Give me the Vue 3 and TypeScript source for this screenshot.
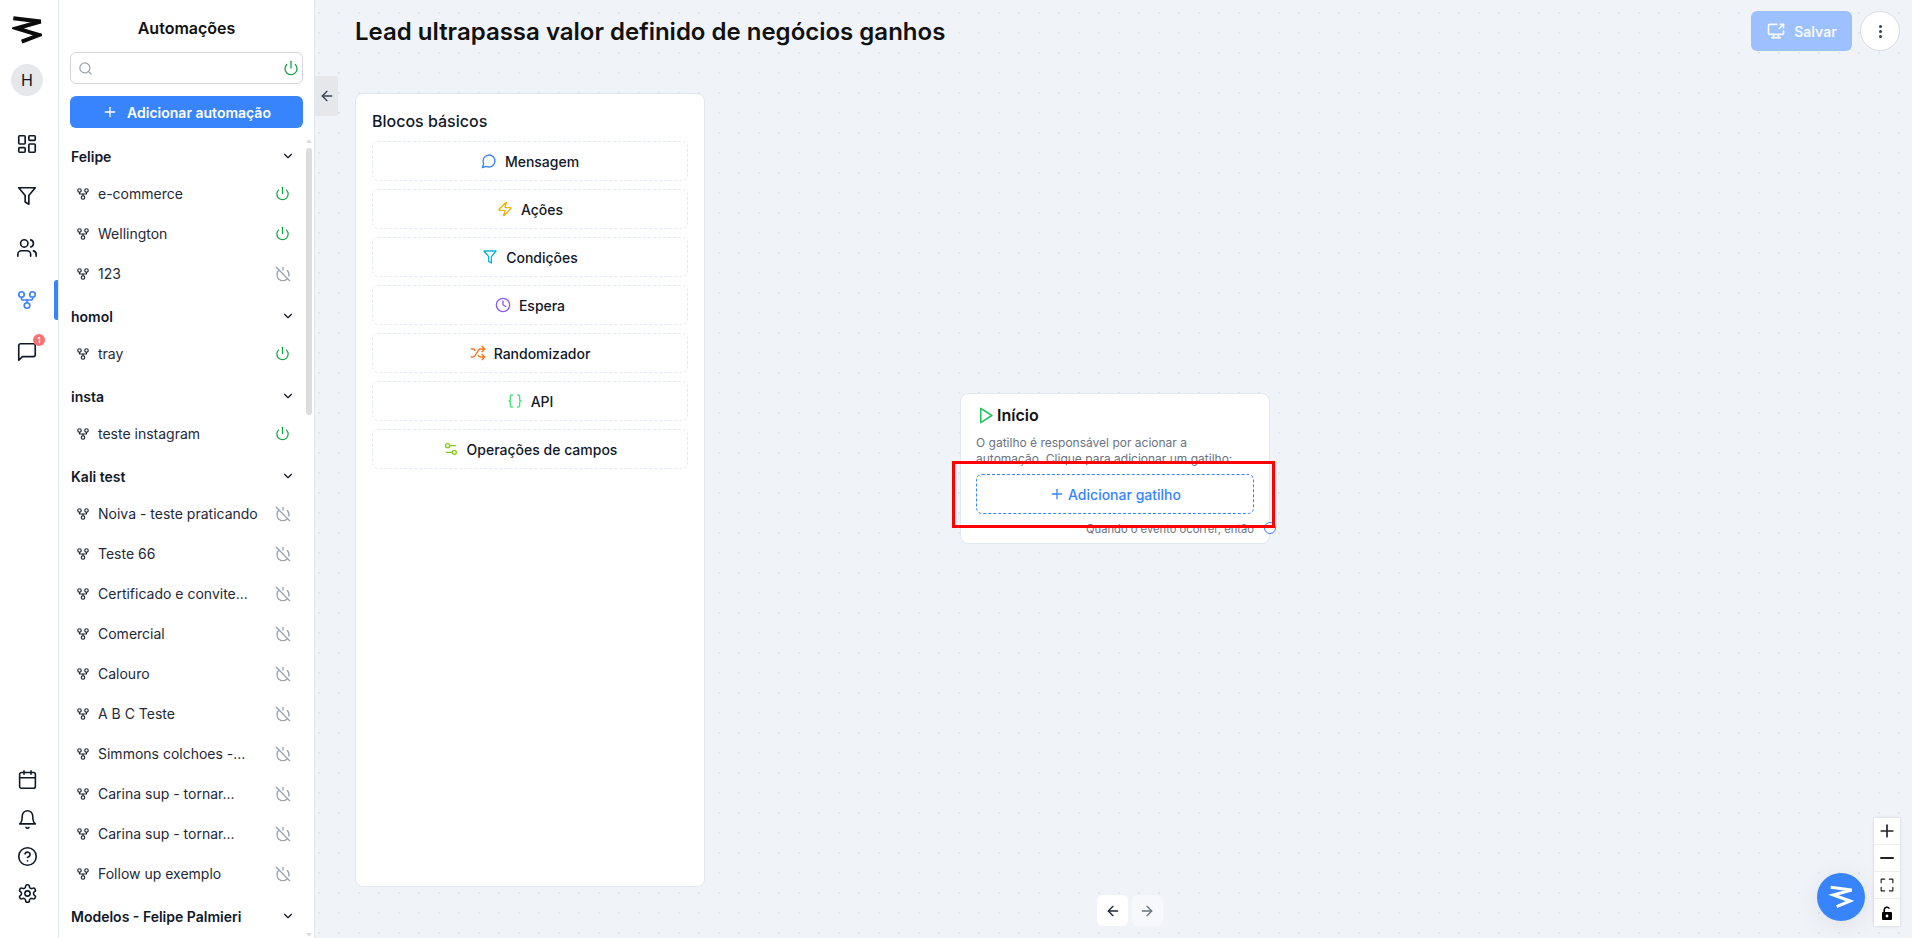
<script setup lang="ts">
const icons: Record<string, string> = {
  dashboard: '<rect width="7" height="9" x="3" y="3" rx="1"/><rect width="7" height="5" x="14" y="3" rx="1"/><rect width="7" height="9" x="14" y="12" rx="1"/><rect width="7" height="5" x="3" y="16" rx="1"/>',
  funnel: '<path d="M3 3h18l-7 8.5V21l-4-2.5v-7z"/>',
  users: '<path d="M16 21v-2a4 4 0 0 0-4-4H6a4 4 0 0 0-4 4v2"/><circle cx="9" cy="7" r="4"/><path d="M22 21v-2a4 4 0 0 0-3-3.87"/><path d="M16 3.13a4 4 0 0 1 0 7.75"/>',
  flow: '<circle cx="12" cy="18" r="3"/><circle cx="6" cy="6" r="3"/><circle cx="18" cy="6" r="3"/><path d="M18 9v2c0 .6-.4 1-1 1H7c-.6 0-1-.4-1-1V9"/><path d="M12 12v3"/>',
  chat: '<path d="M21 15a2 2 0 0 1-2 2H7l-4 4V5a2 2 0 0 1 2-2h14a2 2 0 0 1 2 2z"/>',
  calendar: '<path d="M8 2v4"/><path d="M16 2v4"/><rect width="18" height="18" x="3" y="4" rx="2"/><path d="M3 10h18"/>',
  bell: '<path d="M10.3 21a1.94 1.94 0 0 0 3.4 0"/><path d="M6 8a6 6 0 0 1 12 0c0 7 3 9 3 9H3s3-2 3-9"/>',
  help: '<circle cx="12" cy="12" r="10"/><path d="M9.09 9a3 3 0 0 1 5.83 1c0 2-3 3-3 3"/><path d="M12 17h.01"/>',
  gear: '<path d="M12.22 2h-.44a2 2 0 0 0-2 2v.18a2 2 0 0 1-1 1.73l-.43.25a2 2 0 0 1-2 0l-.15-.08a2 2 0 0 0-2.73.73l-.22.38a2 2 0 0 0 .73 2.73l.15.1a2 2 0 0 1 1 1.72v.51a2 2 0 0 1-1 1.74l-.15.09a2 2 0 0 0-.73 2.73l.22.38a2 2 0 0 0 2.73.73l.15-.08a2 2 0 0 1 2 0l.43.25a2 2 0 0 1 1 1.73V20a2 2 0 0 0 2 2h.44a2 2 0 0 0 2-2v-.18a2 2 0 0 1 1-1.73l.43-.25a2 2 0 0 1 2 0l.15.08a2 2 0 0 0 2.73-.73l.22-.39a2 2 0 0 0-.73-2.73l-.15-.08a2 2 0 0 1-1-1.74v-.5a2 2 0 0 1 1-1.74l.15-.09a2 2 0 0 0 .73-2.73l-.22-.38a2 2 0 0 0-2.73-.73l-.15.08a2 2 0 0 1-2 0l-.43-.25a2 2 0 0 1-1-1.73V4a2 2 0 0 0-2-2z"/><circle cx="12" cy="12" r="3"/>',
  power: '<path d="M12 2v10"/><path d="M18.4 6.6a9 9 0 1 1-12.77.04"/>',
  poweroff: '<path d="M18.36 6.64A9 9 0 0 1 20.77 15"/><path d="M6.16 6.16a9 9 0 1 0 12.68 12.68"/><path d="M12 2v4"/><path d="m2 2 20 20"/>',
  search: '<circle cx="11" cy="11" r="8"/><path d="m21 21-4.3-4.3"/>',
  plus: '<path d="M5 12h14"/><path d="M12 5v14"/>',
  chevron: '<path d="m6 9 6 6 6-6"/>',
  left: '<path d="m12 19-7-7 7-7"/><path d="M19 12H5"/>',
  right: '<path d="M5 12h14"/><path d="m12 5 7 7-7 7"/>',
  bubble: '<path d="M7.9 20A9 9 0 1 0 4 16.1L2 22Z"/>',
  zap: '<path d="M4 14a1 1 0 0 1-.78-1.63l9.9-10.2a.5.5 0 0 1 .86.46l-1.92 6.02A1 1 0 0 0 13 10h7a1 1 0 0 1 .78 1.63l-9.9 10.2a.5.5 0 0 1-.86-.46l1.92-6.02A1 1 0 0 0 11 14z"/>',
  clock: '<circle cx="12" cy="12" r="10"/><path d="M12 6v6l4 2"/>',
  shuffle: '<path d="m18 14 4 4-4 4"/><path d="m18 2 4 4-4 4"/><path d="M2 18h1.973a4 4 0 0 0 3.3-1.7l5.454-8.6a4 4 0 0 1 3.3-1.7H22"/><path d="M2 6h1.972a4 4 0 0 1 3.6 2.2"/><path d="M22 18h-6.041a4 4 0 0 1-3.3-1.8l-.359-.45"/>',
  braces: '<path d="M8 3H7a2 2 0 0 0-2 2v5a2 2 0 0 1-2 2 2 2 0 0 1 2 2v5c0 1.1.9 2 2 2h1"/><path d="M16 21h1a2 2 0 0 0 2-2v-5c0-1.1.9-2 2-2a2 2 0 0 1-2-2V5a2 2 0 0 0-2-2h-1"/>',
  sliders: '<path d="M14 17H5"/><path d="M19 7h-9"/><circle cx="17" cy="17" r="3"/><circle cx="7" cy="7" r="3"/>',
  play: '<polygon points="6 3 20 12 6 21 6 3"/>',
  monitor: '<path d="M21 12v3a1 1 0 0 1-1 1H4a1 1 0 0 1-1-1V5a1 1 0 0 1 1-1h9"/><path d="M7 20h10"/><path d="M9 16v4"/><path d="M15 16v4"/><path d="M17 4h4v4"/><path d="m16 9 5-5"/>',
}

const topNav = [
  { icon: 'dashboard' },
  { icon: 'funnel' },
  { icon: 'users' },
  { icon: 'flow', active: true },
  { icon: 'chat', badge: 1 },
]
const bottomNav = ['calendar', 'bell', 'help', 'gear']

const groups = [
  { name: 'Felipe', items: [
    { name: 'e-commerce', on: true },
    { name: 'Wellington', on: true },
    { name: '123', on: false },
  ] },
  { name: 'homol', items: [{ name: 'tray', on: true }] },
  { name: 'insta', items: [{ name: 'teste instagram', on: true }] },
  { name: 'Kali test', items: [
    { name: 'Noiva - teste praticando', on: false },
    { name: 'Teste 66', on: false },
    { name: 'Certificado e convite...', on: false },
    { name: 'Comercial', on: false },
    { name: 'Calouro', on: false },
    { name: 'A B C Teste', on: false },
    { name: 'Simmons colchoes -...', on: false },
    { name: 'Carina sup - tornar...', on: false },
    { name: 'Carina sup - tornar...', on: false },
    { name: 'Follow up exemplo', on: false },
  ] },
  { name: 'Modelos - Felipe Palmieri', items: [] },
]

const blocks = [
  { label: 'Mensagem', icon: 'bubble', color: '#3b82f6' },
  { label: 'Ações', icon: 'zap', color: '#eab308' },
  { label: 'Condições', icon: 'funnel', color: '#06b6d4' },
  { label: 'Espera', icon: 'clock', color: '#8b5cf6' },
  { label: 'Randomizador', icon: 'shuffle', color: '#f97316' },
  { label: 'API', icon: 'braces', color: '#4ade80' },
  { label: 'Operações de campos', icon: 'sliders', color: '#84cc16' },
]
</script>

<template>
  <div class="app">
    <!-- barra lateral -->
    <nav class="rail">
      <svg class="logo" width="30" height="32" viewBox="0 0 30 32" fill="none" stroke="#0b0b0b" stroke-width="4">
        <path d="M1.3 4.3 28.7 7.5 4.7 14.3 27 21 9.7 27.7" />
      </svg>
      <div class="avatar">H</div>
      <div class="rail-top">
        <div v-for="n in topNav" :key="n.icon" :class="['rail-item', n.active ? 'active' : '']">
          <svg class="ic" width="22" height="22" viewBox="0 0 24 24" v-html="icons[n.icon]"></svg>
          <span v-if="n.badge" class="badge">{{ n.badge }}</span>
        </div>
      </div>
      <div class="rail-bottom">
        <div v-for="n in bottomNav" :key="n" class="rail-item small">
          <svg class="ic" width="21" height="21" viewBox="0 0 24 24" v-html="icons[n]"></svg>
        </div>
      </div>
    </nav>

    <!-- lista de automacoes -->
    <aside class="panel">
      <h2 class="panel-title">Automações</h2>
      <div class="search">
        <svg class="ic search-ic" width="15" height="15" viewBox="0 0 24 24" v-html="icons.search"></svg>
        <svg class="ic on" width="16" height="16" viewBox="0 0 24 24" v-html="icons.power"></svg>
      </div>
      <button class="add-btn">
        <svg class="ic" width="16" height="16" viewBox="0 0 24 24" v-html="icons.plus"></svg>
        <span>Adicionar automação</span>
      </button>
      <div class="list">
        <section v-for="g in groups" :key="g.name" class="group">
          <div class="group-head">
            <span>{{ g.name }}</span>
            <svg class="ic" width="14" height="14" viewBox="0 0 24 24" v-html="icons.chevron"></svg>
          </div>
          <div v-for="(item, i) in g.items" :key="i" class="item">
            <svg class="ic" width="14" height="14" viewBox="0 0 24 24" v-html="icons.flow"></svg>
            <span class="item-name">{{ item.name }}</span>
            <svg :class="['ic', item.on ? 'on' : 'off']" :width="item.on ? 15 : 16" :height="item.on ? 15 : 16" viewBox="0 0 24 24" v-html="icons[item.on ? 'power' : 'poweroff']"></svg>
          </div>
        </section>
      </div>
      <div class="scroll-arrow up"></div>
      <div class="scroll-thumb"></div>
      <div class="scroll-arrow down"></div>
    </aside>

    <!-- editor -->
    <main class="canvas">
      <header class="topbar">
        <h1>Lead ultrapassa valor definido de negócios ganhos</h1>
        <div class="actions">
          <button class="save">
            <svg class="ic" width="20" height="20" viewBox="0 0 24 24" v-html="icons.monitor"></svg>
            <span>Salvar</span>
          </button>
          <button class="more"><i></i><i></i><i></i></button>
        </div>
      </header>

      <button class="collapse">
        <svg class="ic" width="16" height="16" viewBox="0 0 24 24" v-html="icons.left"></svg>
      </button>

      <div class="blocks">
        <h3>Blocos básicos</h3>
        <div class="block-list">
          <div v-for="b in blocks" :key="b.label" class="block">
            <svg class="ic" width="16" height="16" viewBox="0 0 24 24" :style="{ color: b.color }" v-html="icons[b.icon]"></svg>
            <span>{{ b.label }}</span>
          </div>
        </div>
      </div>

      <div class="node">
        <div class="node-title">
          <svg class="ic play" width="19" height="19" viewBox="0 0 24 24" v-html="icons.play"></svg>
          <span>Início</span>
        </div>
        <p class="node-text">O gatilho é responsável por acionar a automação. Clique para adicionar um gatilho:</p>
        <button class="trigger">
          <svg class="ic" width="16" height="16" viewBox="0 0 24 24" v-html="icons.plus"></svg>
          <span>Adicionar gatilho</span>
        </button>
        <div class="node-foot">Quando o evento ocorrer, então</div>
        <span class="handle"></span>
      </div>
      <div class="highlight"></div>

      <div class="history">
        <button class="hist-btn">
          <svg class="ic" width="16" height="16" viewBox="0 0 24 24" v-html="icons.left"></svg>
        </button>
        <button class="hist-btn off">
          <svg class="ic" width="16" height="16" viewBox="0 0 24 24" v-html="icons.right"></svg>
        </button>
      </div>

      <div class="zoom-ctrl">
        <div class="zoom-cell">
          <svg class="ic" width="20" height="20" viewBox="0 0 24 24" v-html="icons.plus"></svg>
        </div>
        <div class="zoom-cell">
          <svg class="ic" width="14" height="14" viewBox="0 0 14 14"><path d="M1 7h12" /></svg>
        </div>
        <div class="zoom-cell">
          <svg class="ic" width="14" height="14" viewBox="0 0 24 24" stroke-width="3"><path d="M8 2H2v6M16 2h6v6M22 16v6h-6M8 22H2v-6" /></svg>
        </div>
        <div class="zoom-cell">
          <svg width="12" height="14" viewBox="0 0 12 14">
            <path d="M3.2 6V4a2.8 2.8 0 0 1 5.2-1.4" fill="none" stroke="#000" stroke-width="1.6" />
            <rect x="1" y="6" width="10" height="8" rx="1" fill="#000" />
            <circle cx="6" cy="10" r="1.4" fill="#fff" />
          </svg>
        </div>
      </div>

      <button class="support">
        <svg width="26" height="24" viewBox="0 0 26 24" fill="none" stroke="#fff" stroke-width="3">
          <path d="M2.7 2.3 23.7 5 5.3 10 22 16 8.7 21.7" />
        </svg>
      </button>
    </main>
  </div>
</template>

<style scoped>
.app {
  display: flex;
  width: 100vw;
  height: 100vh;
  overflow: hidden;
  font-family: Inter, "Noto Sans", sans-serif;
  color: #111827;
  background: #fff;
}

.ic {
  fill: none;
  stroke: currentColor;
  stroke-width: 2;
  stroke-linecap: round;
  stroke-linejoin: round;
  flex: none;
}
.on { color: #16a34a; }
.off { color: #9ca3af; margin: 0 -0.5px; }

button {
  font-family: inherit;
  border: none;
  cursor: pointer;
}

/* barra lateral */
.rail {
  width: 59px;
  flex: none;
  display: flex;
  flex-direction: column;
  align-items: center;
  border-right: 1px solid #e2e8f0;
  box-sizing: border-box;
  padding: 14px 4px 26px 0;
}
.logo {
  display: block;
  height: 32px;
}
.avatar {
  width: 32px;
  height: 32px;
  margin-top: 18px;
  border-radius: 50%;
  background: #e5e7eb;
  display: flex;
  align-items: center;
  justify-content: center;
  font-size: 16px;
}
.rail-top {
  margin-top: 22px;
  width: 100%;
}
.rail-bottom {
  margin-top: auto;
  width: 100%;
}
.rail-item {
  position: relative;
  height: 52px;
  display: flex;
  align-items: center;
  justify-content: center;
  color: #111827;
}
.rail-item.small {
  height: 37px;
}
.rail-item.small:first-child {
  margin-bottom: 3px;
}
.rail-item .ic {
  stroke-width: 1.8;
}
.rail-item.active {
  color: #3b82f6;
}
.rail-item.active::after {
  content: "";
  position: absolute;
  right: -4px;
  top: 6px;
  width: 4px;
  height: 40px;
  background: #3884fd;
  border-radius: 3px 0 0 3px;
}
.badge {
  position: absolute;
  left: 33px;
  top: 8px;
  width: 12px;
  height: 12px;
  border-radius: 50%;
  background: #f87171;
  color: #fff;
  font-size: 8px;
  font-weight: 600;
  display: flex;
  align-items: center;
  justify-content: center;
}

/* lista */
.panel {
  position: relative;
  width: 256px;
  flex: none;
  box-sizing: border-box;
  border-right: 1px solid #e2e8f0;
  padding: 0 11px;
  display: flex;
  flex-direction: column;
  overflow: hidden;
}
.panel-title {
  margin: 18px 0 0;
  height: 20px;
  line-height: 20px;
  text-align: center;
  font-size: 16px;
  font-weight: 600;
  color: #111;
}
.search {
  margin-top: 14px;
  height: 32px;
  box-sizing: border-box;
  border: 1px solid #d1d5db;
  border-radius: 6px;
  display: flex;
  align-items: center;
  justify-content: space-between;
  padding: 0 3px 0 7px;
}
.search-ic {
  color: #9ca3af;
}
.add-btn {
  margin-top: 12px;
  height: 32px;
  flex: none;
  border-radius: 6px;
  background: #3884fd;
  color: #fff;
  font-size: 14px;
  font-weight: 600;
  display: flex;
  align-items: center;
  justify-content: center;
  gap: 9px;
}
.list {
  margin-top: 11px;
  flex: 1;
  min-height: 0;
  overflow: hidden;
}
.group {
  margin-bottom: 6px;
}
.group-head {
  height: 34px;
  display: flex;
  align-items: center;
  justify-content: space-between;
  padding: 0 8px 0 1px;
  font-size: 14px;
  font-weight: 600;
  color: #111827;
}
.item {
  height: 40px;
  display: flex;
  align-items: center;
  padding: 0 13px 0 6px;
  font-size: 14px;
  color: #1f2937;
}
.item .ic {
  margin-top: 1px;
}
.item-name {
  flex: 1;
  margin-left: 8px;
  white-space: nowrap;
}
.scroll-thumb {
  position: absolute;
  left: 247px;
  top: 148px;
  width: 6px;
  height: 267px;
  border-radius: 3px;
  background: #dcdde1;
}
.scroll-arrow {
  position: absolute;
  left: 247px;
  width: 0;
  height: 0;
  border-left: 3px solid transparent;
  border-right: 3px solid transparent;
}
.scroll-arrow.up {
  top: 139px;
  border-bottom: 4px solid #dcdde1;
}
.scroll-arrow.down {
  top: 933px;
  border-top: 4px solid #dcdde1;
}

/* editor */
.canvas {
  position: relative;
  flex: 1;
  min-width: 0;
  display: flex;
  flex-direction: column;
  background-color: #f0f4f9;
  background-image: radial-gradient(circle, #e0e4eb 1px, transparent 1px);
  background-size: 20px 20px;
  background-position: -6px 3px;
}
.topbar {
  height: 62px;
  flex: none;
  display: flex;
  align-items: center;
  justify-content: space-between;
  padding: 0 12px 0 40px;
}
.topbar h1 {
  margin: 0;
  font-size: 24px;
  font-weight: 600;
  color: #111;
}
.actions {
  display: flex;
  gap: 8px;
}
.save {
  width: 101px;
  height: 40px;
  border-radius: 6px;
  background: #9cc1fe;
  color: #f4f8ff;
  font-size: 14px;
  font-weight: 600;
  display: flex;
  align-items: center;
  justify-content: center;
  gap: 8px;
}
.more {
  width: 40px;
  height: 40px;
  box-sizing: border-box;
  border: 1px solid #d9dde3;
  border-radius: 50%;
  background: #fff;
  display: flex;
  flex-direction: column;
  align-items: center;
  justify-content: center;
  gap: 2px;
  padding: 0;
}
.more i {
  width: 3px;
  height: 3px;
  border-radius: 50%;
  background: #374151;
}
.collapse {
  position: absolute;
  left: 0;
  top: 76px;
  width: 23px;
  height: 40px;
  padding: 0;
  background: #e5e7eb;
  color: #374151;
  border-radius: 0 4px 4px 0;
  display: flex;
  align-items: center;
  justify-content: center;
}
.blocks {
  width: 350px;
  flex: 1;
  min-height: 0;
  margin: 31px 0 51px 40px;
  box-sizing: border-box;
  padding: 15px 16px;
  background: #fff;
  border: 1px solid #e2e8f0;
  border-radius: 8px;
}
.blocks h3 {
  margin: 0 0 8px;
  font-size: 16px;
  font-weight: 500;
  line-height: 24px;
  color: #111827;
}
.block-list {
  display: flex;
  flex-direction: column;
  gap: 8px;
}
.block {
  height: 40px;
  box-sizing: border-box;
  border: 1px dashed #e2e8f0;
  border-radius: 6px;
  display: flex;
  align-items: center;
  justify-content: center;
  gap: 8px;
  font-size: 14px;
  font-weight: 500;
  color: #111827;
}

/* no inicial */
.node {
  position: absolute;
  left: 645px;
  top: 393px;
  width: 310px;
  height: 151px;
  box-sizing: border-box;
  padding: 11px 15px 0;
  background: #fff;
  border: 1px solid #e2e8f0;
  border-radius: 8px;
  display: flex;
  flex-direction: column;
}
.node-title {
  display: flex;
  align-items: center;
  gap: 2px;
  font-size: 16px;
  font-weight: 600;
  line-height: 20px;
  color: #111;
}
.play {
  color: #22c55e;
}
.node-text {
  margin: 10px 0 0;
  height: 32px;
  font-size: 12px;
  line-height: 15.5px;
  color: #6b7280;
}
.trigger {
  margin-top: 7px;
  flex: none;
  height: 40px;
  box-sizing: border-box;
  background: #fff;
  border: 1px dashed #3884fd;
  border-radius: 6px;
  color: #3884fd;
  font-size: 14px;
  font-weight: 500;
  display: flex;
  align-items: center;
  justify-content: center;
  gap: 3px;
}
.node-foot {
  margin-top: 7px;
  text-align: right;
  font-size: 11.2px;
  line-height: 16px;
  color: #6b7280;
}
.handle {
  position: absolute;
  right: -7px;
  top: 128px;
  width: 12px;
  height: 12px;
  box-sizing: border-box;
  border: 1.5px solid #3884fd;
  border-radius: 50%;
  background: #fff;
}
/* marcacao vermelha do print */
.highlight {
  position: absolute;
  left: 637px;
  top: 461px;
  width: 323px;
  height: 67px;
  box-sizing: border-box;
  border: 3px solid #f00;
}
.history {
  position: absolute;
  left: 782px;
  top: 895px;
  display: flex;
  gap: 4px;
}
.hist-btn {
  width: 31px;
  height: 31px;
  padding: 0;
  border-radius: 6px;
  background: #fff;
  color: #1f2937;
  display: flex;
  align-items: center;
  justify-content: center;
}
.hist-btn.off {
  background: #f6f8fb;
  color: #6b7280;
}
.zoom-ctrl {
  position: absolute;
  right: 12px;
  top: 818px;
  width: 26px;
  background: #fff;
  box-shadow: 0 0 3px rgba(0, 0, 0, 0.15);
}
.zoom-cell {
  height: 27px;
  box-sizing: border-box;
  border-bottom: 1px solid #eeeeee;
  display: flex;
  align-items: center;
  justify-content: center;
  color: #222;
}
.zoom-cell:last-child {
  border-bottom: none;
}
.support {
  position: absolute;
  left: 1502px;
  top: 873px;
  width: 48px;
  height: 48px;
  padding: 0;
  border-radius: 50%;
  background: #3884fd;
  box-shadow: 0 4px 24px rgba(0, 0, 0, 0.08);
  display: flex;
  align-items: center;
  justify-content: center;
}
</style>

<style>
html, body {
  margin: 0;
  overflow: hidden;
}
</style>
